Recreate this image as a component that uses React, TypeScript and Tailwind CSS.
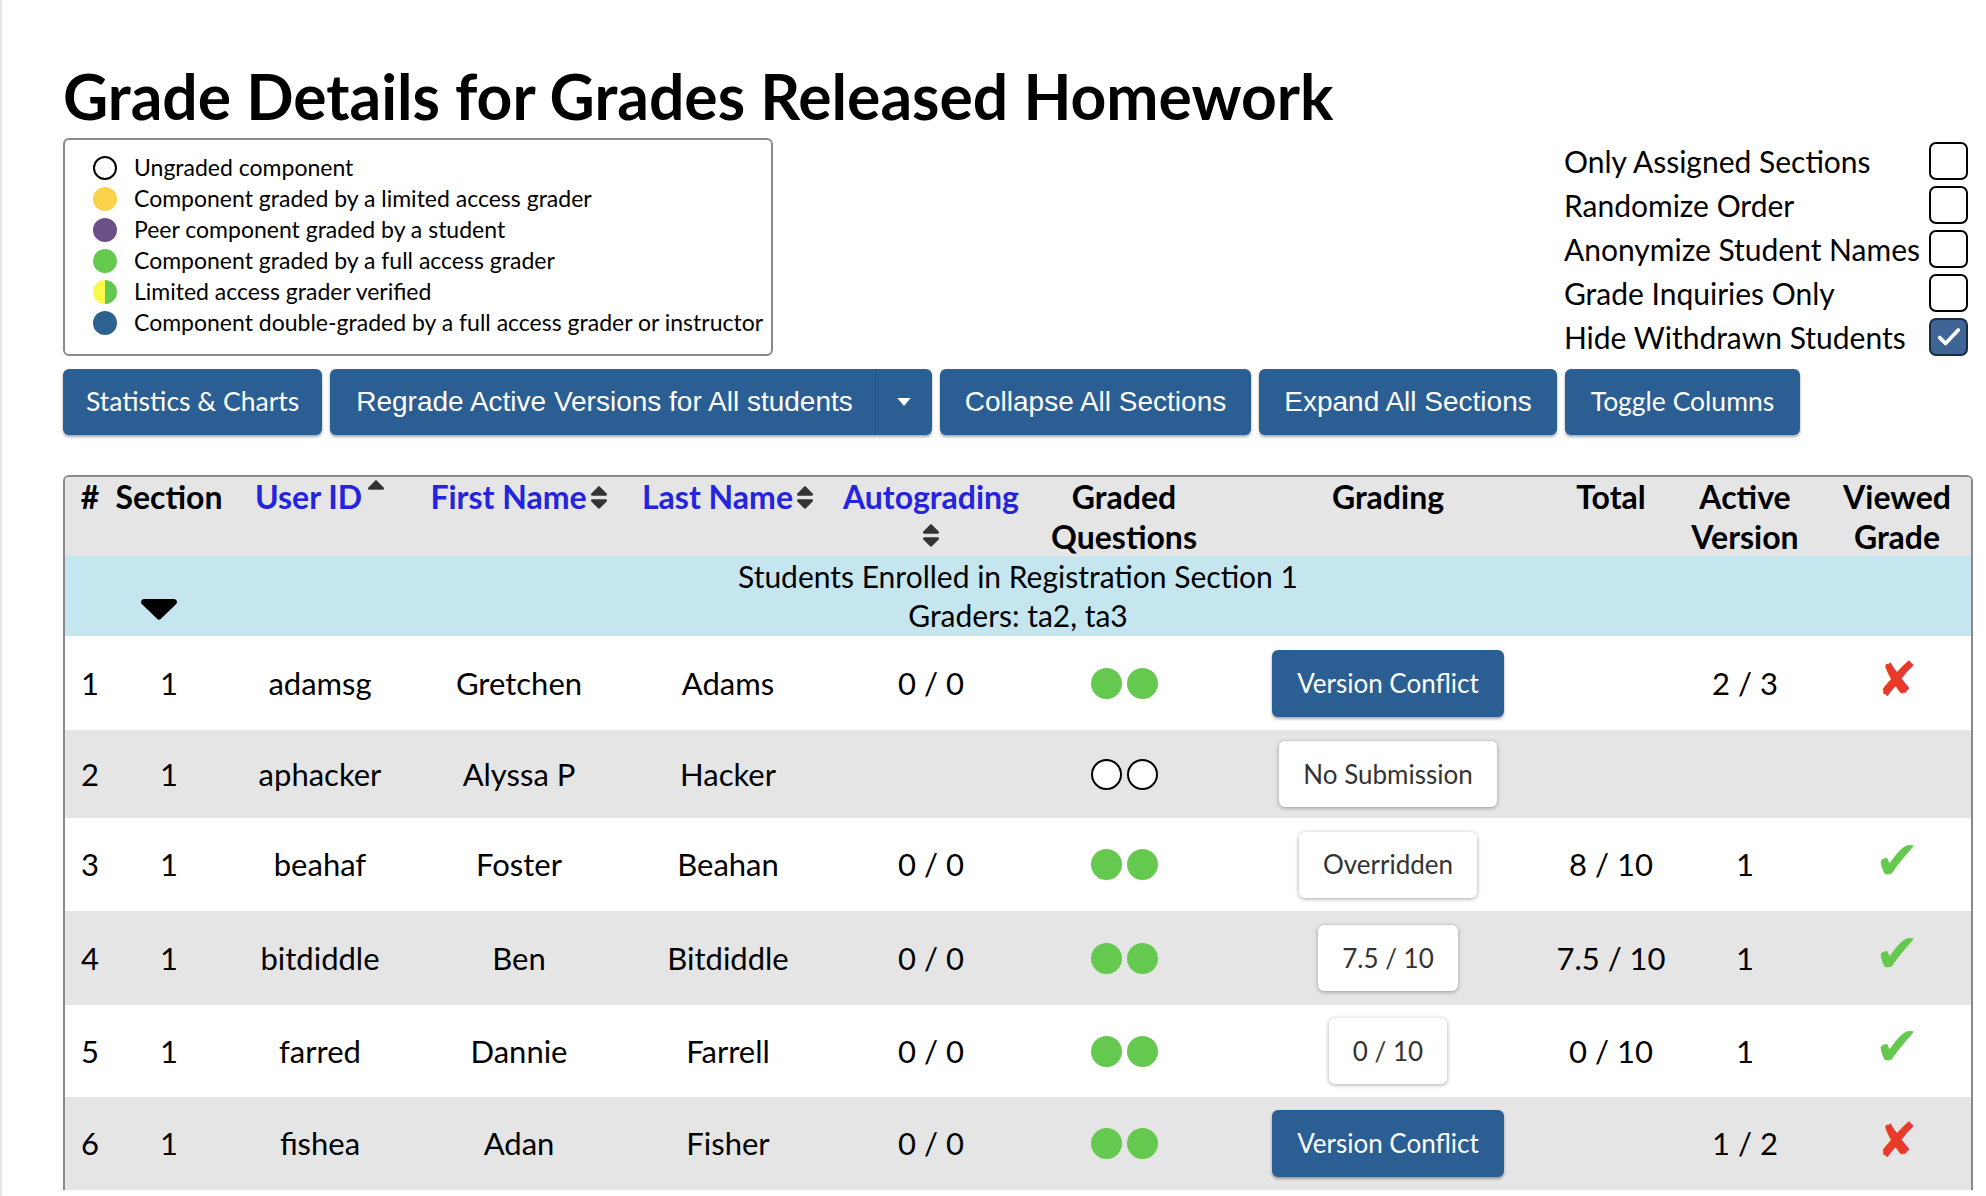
import React from "react";

const cols =
  "grid grid-cols-[50px_108px_194px_204px_214px_192px_194px_334px_112px_156px_1fr]";

const SortIcon: React.FC<{ upOnly?: boolean }> = ({ upOnly }) => (
  <svg viewBox="0 0 320 512" className="w-[18px] h-[29px] shrink-0" fill="#333">
    <path d="M296 183L177 64c-9.4-9.4-24.6-9.4-33.9 0L24 183c-15.1 15.1-4.4 41 17 41h238c21.4 0 32.1-25.9 17-41z" />
    {!upOnly && (
      <path d="M41 288h238c21.4 0 32.1 25.9 17 41L177 448c-9.4 9.4-24.6 9.4-33.9 0L24 329c-15.1-15.1-4.4-41 17-41z" />
    )}
  </svg>
);

const legend = [
  { label: "Ungraded component", dot: "bg-white border-2 border-black" },
  { label: "Component graded by a limited access grader", dot: "bg-[#f8d34a]" },
  { label: "Peer component graded by a student", dot: "bg-[#6c4f87]" },
  { label: "Component graded by a full access grader", dot: "bg-[#66c94f]" },
  { label: "Limited access grader verified", dot: "bg-[linear-gradient(90deg,#f9f94d_50%,#66c94f_50%)]" },
  { label: "Component double-graded by a full access grader or instructor", dot: "bg-[#2d6190]" },
];

const options = [
  { label: "Only Assigned Sections", checked: false },
  { label: "Randomize Order", checked: false },
  { label: "Anonymize Student Names", checked: false },
  { label: "Grade Inquiries Only", checked: false },
  { label: "Hide Withdrawn Students", checked: true },
];

type Row = {
  n: number;
  id: string;
  first: string;
  last: string;
  auto: string;
  graded: boolean;
  grading: string;
  kind: "conflict" | "plain";
  total: string;
  active: string;
  viewed: "yes" | "no" | "";
  h: string;
};

const rows: Row[] = [
  { n: 1, id: "adamsg", first: "Gretchen", last: "Adams", auto: "0 / 0", graded: true, grading: "Version Conflict", kind: "conflict", total: "", active: "2 / 3", viewed: "no", h: "h-[94px]" },
  { n: 2, id: "aphacker", first: "Alyssa P", last: "Hacker", auto: "", graded: false, grading: "No Submission", kind: "plain", total: "", active: "", viewed: "", h: "h-[88px]" },
  { n: 3, id: "beahaf", first: "Foster", last: "Beahan", auto: "0 / 0", graded: true, grading: "Overridden", kind: "plain", total: "8 / 10", active: "1", viewed: "yes", h: "h-[93px]" },
  { n: 4, id: "bitdiddle", first: "Ben", last: "Bitdiddle", auto: "0 / 0", graded: true, grading: "7.5 / 10", kind: "plain", total: "7.5 / 10", active: "1", viewed: "yes", h: "h-[94px]" },
  { n: 5, id: "farred", first: "Dannie", last: "Farrell", auto: "0 / 0", graded: true, grading: "0 / 10", kind: "plain", total: "0 / 10", active: "1", viewed: "yes", h: "h-[92px]" },
  { n: 6, id: "fishea", first: "Adan", last: "Fisher", auto: "0 / 0", graded: true, grading: "Version Conflict", kind: "conflict", total: "", active: "1 / 2", viewed: "no", h: "h-[93px]" },
];

const Dots: React.FC<{ filled: boolean }> = ({ filled }) => (
  <div className="flex gap-[5px]">
    {[0, 1].map((i) => (
      <span
        key={i}
        className={
          filled
            ? "w-[31px] h-[31px] rounded-full bg-[#66c94f]"
            : "w-[31px] h-[31px] rounded-full bg-white border-2 border-black"
        }
      />
    ))}
  </div>
);

export default function App() {
  return (
    <div className="min-h-screen bg-white border-l-2 border-[#e6e6e6] font-['Lato',sans-serif] text-black">
      <div className="pl-[61px] pr-[13px] pt-[60px]">
        <h1 className="text-[62.4px] leading-[72px] font-bold">
          Grade Details for Grades Released Homework
        </h1>

        <div className="flex justify-between items-start mt-[6px]">
          <div className="w-[710px] border-2 border-[#8a8a8a] rounded-[6px] pl-[28px] pt-[12px] pb-[16px]">
            {legend.map((l) => (
              <div key={l.label} className="flex items-center h-[31px]">
                <span className={`w-[24px] h-[24px] rounded-full ${l.dot}`} />
                <span className="ml-[17px] text-[23px]">{l.label}</span>
              </div>
            ))}
          </div>

          <div className="grid grid-cols-[auto_auto] gap-x-[9px] mr-[5px] mt-[1px]">
            {options.map((o) => (
              <React.Fragment key={o.label}>
                <span className="text-[30px] leading-[44px]">{o.label}</span>
                <span className="flex items-center">
                  <span
                    className={
                      o.checked
                        ? "w-[39px] h-[38px] rounded-[7px] border-2 border-[#1b2b40] bg-[#3f6496] flex items-center justify-center"
                        : "w-[39px] h-[38px] rounded-[7px] border-2 border-black bg-white"
                    }
                  >
                    {o.checked && (
                      <svg viewBox="0 0 24 24" className="w-[28px] h-[28px]" fill="none" stroke="white" strokeWidth="3.2" strokeLinecap="round" strokeLinejoin="round">
                        <path d="M4 12.5l5 5L20 6" />
                      </svg>
                    )}
                  </span>
                </span>
              </React.Fragment>
            ))}
          </div>
        </div>

        <div className="flex gap-[8px] mt-[10px]">
          <button className="h-[66px] px-[23px] rounded-[6px] bg-[#2b5e92] text-white text-[26.5px] shadow-[0_2px_3px_rgba(0,0,0,0.35)]">
            Statistics &amp; Charts
          </button>
          <div className="flex h-[66px] rounded-[6px] bg-[#2b5e92] text-white shadow-[0_2px_3px_rgba(0,0,0,0.35)]">
            <button className="pl-[26px] pr-[22px] text-[28px] font-['Liberation_Sans',sans-serif]">
              Regrade Active Versions for All students
            </button>
            <button className="w-[57px] border-l border-[#24517e] flex items-center justify-center">
              <svg viewBox="0 0 10 6" className="w-[14px] h-[8px]" fill="white">
                <path d="M0 0h10L5 6z" />
              </svg>
            </button>
          </div>
          <button className="h-[66px] px-[25px] rounded-[6px] bg-[#2b5e92] text-white text-[28px] font-['Liberation_Sans',sans-serif] shadow-[0_2px_3px_rgba(0,0,0,0.35)]">
            Collapse All Sections
          </button>
          <button className="h-[66px] px-[25px] rounded-[6px] bg-[#2b5e92] text-white text-[28px] font-['Liberation_Sans',sans-serif] shadow-[0_2px_3px_rgba(0,0,0,0.35)]">
            Expand All Sections
          </button>
          <button className="h-[66px] px-[26px] rounded-[6px] bg-[#2b5e92] text-white text-[26.5px] shadow-[0_2px_3px_rgba(0,0,0,0.35)]">
            Toggle Columns
          </button>
        </div>

        <div className="mt-[40px] border-2 border-b-0 border-[#8a8a8a] rounded-t-[6px] overflow-hidden">
          <div className={`${cols} bg-[#e5e5e5] h-[79px] text-[32px] leading-[40px] font-bold text-center`}>
            <div>#</div>
            <div>Section</div>
            <div className="flex justify-center text-[#2424df]">
              User ID
              <span className="ml-[5px]">
                <SortIcon upOnly />
              </span>
            </div>
            <div className="flex justify-center items-start text-[#2424df]">
              First Name
              <span className="ml-[3px] mt-[6px]">
                <SortIcon />
              </span>
            </div>
            <div className="flex justify-center items-start text-[#2424df]">
              Last Name
              <span className="ml-[3px] mt-[6px]">
                <SortIcon />
              </span>
            </div>
            <div className="flex flex-col items-center text-[#2424df]">
              Autograding
              <span className="mt-[4px]">
                <SortIcon />
              </span>
            </div>
            <div>
              Graded
              <br />
              Questions
            </div>
            <div>Grading</div>
            <div>Total</div>
            <div>
              Active
              <br />
              Version
            </div>
            <div>
              Viewed
              <br />
              Grade
            </div>
          </div>

          <div className="flex items-center h-[80px] bg-[#c5e6ef] text-[30px] leading-[39px]">
            <div className="w-[188px] flex justify-center pt-[26px]">
              <svg viewBox="0 0 38 22" className="w-[38px] h-[22px]">
                <path d="M4 1h30a3 3 0 0 1 2.2 5L21.2 20.6a3 3 0 0 1-4.4 0L1.8 6A3 3 0 0 1 4 1z" fill="#000" />
              </svg>
            </div>
            <div className="flex-1 text-center">
              Students Enrolled in Registration Section 1
              <br />
              Graders: ta2, ta3
            </div>
            <div className="w-[188px]" />
          </div>

          {rows.map((r, i) => (
            <div
              key={r.n}
              className={`${cols} ${r.h} items-center text-center text-[31px] ${i % 2 === 1 ? "bg-[#e5e5e5]" : "bg-white"}`}
            >
              <div>{r.n}</div>
              <div>1</div>
              <div>{r.id}</div>
              <div>{r.first}</div>
              <div>{r.last}</div>
              <div>{r.auto}</div>
              <div className="flex justify-center">
                <Dots filled={r.graded} />
              </div>
              <div className="flex justify-center">
                <button
                  className={
                    r.kind === "conflict"
                      ? "h-[67px] px-[25px] rounded-[6px] bg-[#2b5e92] text-white text-[26px] shadow-[0_2px_3px_rgba(0,0,0,0.35)]"
                      : "h-[66px] px-[24px] rounded-[6px] bg-white text-[#333] text-[26px] shadow-[0_1px_4px_rgba(0,0,0,0.35)]"
                  }
                >
                  {r.grading}
                </button>
              </div>
              <div>{r.total}</div>
              <div>{r.active}</div>
              <div className="flex justify-center -mt-[8px]">
                {r.viewed === "yes" && (
                  <span className="text-[54px] leading-none text-[#66c94f] font-['DejaVu_Sans',sans-serif]">✔</span>
                )}
                {r.viewed === "no" && (
                  <span className="text-[48px] leading-none text-[#e8392b] font-['DejaVu_Sans',sans-serif]">✘</span>
                )}
              </div>
            </div>
          ))}
        </div>
      </div>
    </div>
  );
}
